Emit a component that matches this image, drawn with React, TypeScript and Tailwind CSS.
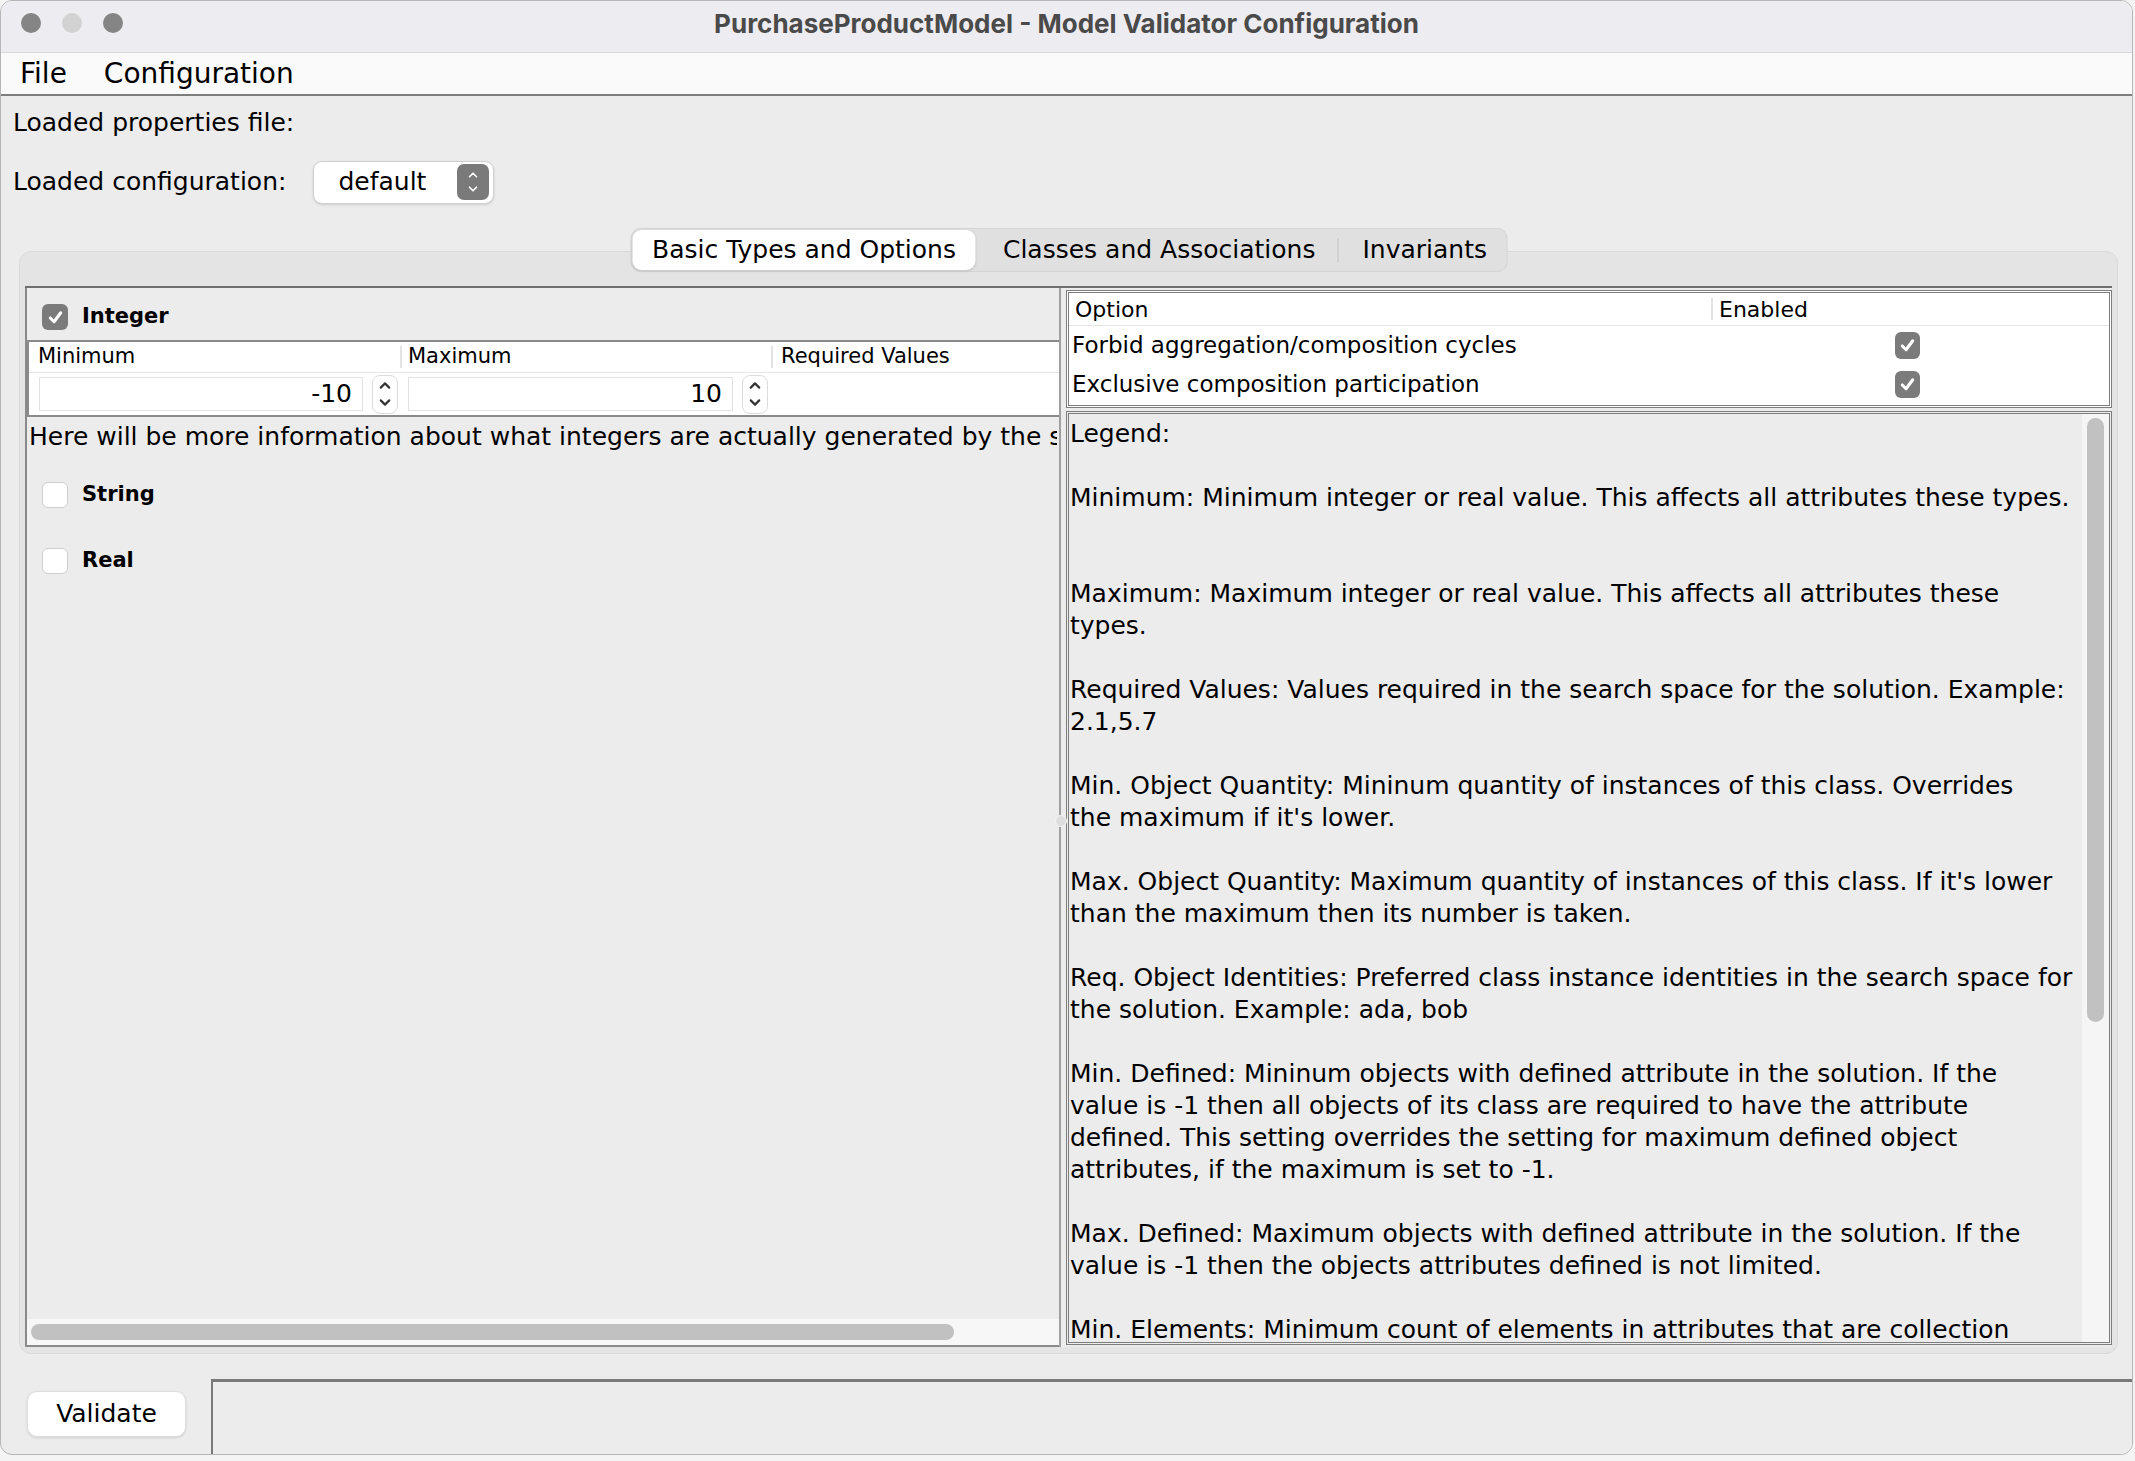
import { ChevronDown, ChevronUp } from "lucide-react";

const body = { fontFamily: '"DejaVu Sans", "Liberation Sans", sans-serif' };

const legend = [
  "Legend:",
  "",
  "Minimum: Minimum integer or real value. This affects all attributes these types.",
  "",
  "",
  "Maximum: Maximum integer or real value. This affects all attributes these",
  "types.",
  "",
  "Required Values: Values required in the search space for the solution. Example:",
  "2.1,5.7",
  "",
  "Min. Object Quantity: Mininum quantity of instances of this class. Overrides",
  "the maximum if it's lower.",
  "",
  "Max. Object Quantity: Maximum quantity of instances of this class. If it's lower",
  "than the maximum then its number is taken.",
  "",
  "Req. Object Identities: Preferred class instance identities in the search space for",
  "the solution. Example: ada, bob",
  "",
  "Min. Defined: Mininum objects with defined attribute in the solution. If the",
  "value is -1 then all objects of its class are required to have the attribute",
  "defined. This setting overrides the setting for maximum defined object",
  "attributes, if the maximum is set to -1.",
  "",
  "Max. Defined: Maximum objects with defined attribute in the solution. If the",
  "value is -1 then the objects attributes defined is not limited.",
  "",
  "Min. Elements: Minimum count of elements in attributes that are collection",
];

function Check({ on, small }: { on: boolean; small?: boolean }) {
  const size = small ? "w-[25px] h-[27px]" : "w-[26px] h-[26px]";
  if (!on)
    return (
      <div
        className={`${size} rounded-[6px] bg-white border border-[#cfcfcf] shrink-0`}
      />
    );
  return (
    <div
      className={`${size} rounded-[6px] bg-[#7b7b7b] flex items-center justify-center shrink-0`}
    >
      <svg viewBox="0 0 20 20" className="w-[19px] h-[19px]">
        <path
          d="M4.5 10.5 L8.5 14.5 L15.5 5"
          fill="none"
          stroke="white"
          strokeWidth="3.2"
          strokeLinecap="round"
          strokeLinejoin="round"
        />
      </svg>
    </div>
  );
}

function Spinner({ value, w }: { value: string; w: string }) {
  return (
    <div className="flex items-center">
      <div
        className={`${w} h-[34px] bg-white border border-[#e2e2e2] flex items-center justify-end pr-[10px] text-[25px] text-black`}
      >
        {value}
      </div>
      <div className="ml-[9px] w-[26px] h-[39px] rounded-[8px] bg-white border border-[#dcdcdc] flex flex-col items-center justify-center text-[#333]">
        <ChevronUp className="w-[20px] h-[17px]" strokeWidth={3} />
        <ChevronDown className="w-[20px] h-[17px]" strokeWidth={3} />
      </div>
    </div>
  );
}

export default function App() {
  return (
    <div
      className="w-[2135px] h-[1461px] bg-[#f4f4f4] overflow-hidden relative"
      style={body}
    >
      <div className="w-[2133px] h-[1455px] rounded-[12px] bg-[#ececec] flex flex-col overflow-hidden border border-[#b5b5b5]">
        {/* title bar */}
        <div className="h-[52px] bg-[#edecf0] border-b border-[#d8d8d8] flex items-center relative shrink-0 pb-[8px]">
          <div className="flex items-center gap-[21px] pl-[20px]">
            <div className="w-[20px] h-[20px] rounded-full bg-[#858585]" />
            <div className="w-[20px] h-[20px] rounded-full bg-[#d2d2d2]" />
            <div className="w-[20px] h-[20px] rounded-full bg-[#858585]" />
          </div>
          <div
            className="absolute left-0 right-0 top-0 h-[44px] flex items-center justify-center text-[26px] font-bold text-[#4a4a4a]"
            style={{ fontFamily: "Inter, sans-serif" }}
          >
            PurchaseProductModel - Model Validator Configuration
          </div>
        </div>

        {/* menu */}
        <div className="h-[43px] bg-[#fafafa] border-b-2 border-[#7e7e7e] flex items-center gap-[37px] pl-[19px] text-[28px] text-black shrink-0">
          <span>File</span>
          <span>Configuration</span>
        </div>

        <div className="flex flex-col flex-1 min-h-0">
          <div className="h-[54px] flex items-center pl-[12px] text-[25px] text-black">
            Loaded properties file:
          </div>
          <div className="h-[64px] flex items-center pl-[12px] text-[25px] text-black">
            <span>Loaded configuration:</span>
            <div className="ml-[27px] w-[181px] h-[43px] rounded-[9px] bg-white border border-[#cfcfcf] flex items-center justify-between pl-[24px] pr-[4px] shadow-sm">
              <span>default</span>
              <div className="w-[32px] h-[36px] rounded-[7px] bg-[#7a7a7a] flex flex-col items-center justify-center text-white">
                <ChevronUp className="w-[18px] h-[14px]" strokeWidth={3} />
                <ChevronDown className="w-[18px] h-[14px]" strokeWidth={3} />
              </div>
            </div>
          </div>

          {/* tabbed pane */}
          <div className="relative ml-[18px] mr-[14px] mt-[37px] h-[1103px] rounded-[12px] bg-[#e4e4e4] border border-[#d9d9d9] px-[5px] pt-[34px] pb-[6px] flex flex-col">
            <div className="absolute left-1/2 -translate-x-1/2 top-[-24px] h-[44px] rounded-[10px] bg-[#e0e0e0] border border-[#d4d4d4] flex items-center text-[25px] text-black p-[1px] whitespace-nowrap">
              <div className="h-full px-[20px] rounded-[9px] bg-white shadow flex items-center">
                Basic Types and Options
              </div>
              <div className="pl-[27px] pr-[22px]">Classes and Associations</div>
              <div className="w-px h-[24px] bg-[#c4c4c4]" />
              <div className="pl-[24px] pr-[18px]">Invariants</div>
            </div>

            <div className="flex-1 min-h-0 border-t-2 border-[#6f6f6f] flex">
              {/* left panel */}
              <div className="w-[1034px] border-l-2 border-b-2 border-[#8a8a8a] bg-[#ececec] flex flex-col relative">
                <div className="flex-1 min-h-0 overflow-hidden">
                  <div className="h-[52px] flex items-center pl-[15px] pt-[6px] gap-[14px]">
                    <Check on />
                    <span className="text-[21px] font-bold text-black">Integer</span>
                  </div>
                  <div className="w-[1060px] border-t-2 border-l-2 border-b-2 border-[#8a8a8a] bg-white">
                    <div className="h-[31px] flex text-[21px] text-black border-b border-[#e6e6e6]">
                      <div className="w-[371px] pl-[9px] flex items-center">Minimum</div>
                      <div className="w-[2px] h-[22px] bg-[#e3e3e3] self-center" />
                      <div className="w-[369px] pl-[6px] flex items-center">Maximum</div>
                      <div className="w-[2px] h-[22px] bg-[#e3e3e3] self-center" />
                      <div className="flex-1 pl-[8px] flex items-center">Required Values</div>
                    </div>
                    <div className="h-[42px] flex items-center pl-[10px] gap-[10px]">
                      <Spinner value="-10" w="w-[324px]" />
                      <Spinner value="10" w="w-[325px]" />
                    </div>
                  </div>
                  <div className="w-[1030px] h-[40px] flex items-center pl-[2px] text-[25px] text-black whitespace-nowrap overflow-hidden">
                    Here will be more information about what integers are actually generated by the solver
                  </div>
                  <div className="h-[66px] mt-[5px] flex items-center pl-[15px] gap-[14px]">
                    <Check on={false} />
                    <span className="text-[21px] font-bold text-black">String</span>
                  </div>
                  <div className="h-[66px] flex items-center pl-[15px] gap-[14px]">
                    <Check on={false} />
                    <span className="text-[21px] font-bold text-black">Real</span>
                  </div>
                </div>
                <div className="h-[26px] bg-[#f7f7f7] flex items-center px-[4px]">
                  <div className="w-[923px] h-[16px] rounded-full bg-[#c1c1c1]" />
                </div>
                <div className="absolute right-[-8px] top-[527px] w-[12px] h-[12px] rounded-full bg-[#dedede] border border-[#f4f4f4]" />
              </div>

              {/* divider */}
              <div className="w-[7px] bg-[#ececec] border-l-2 border-[#a0a0a0]" />

              {/* right panel */}
              <div className="flex-1 flex flex-col bg-[#ececec] pt-[2px] pb-[2px]">
                <div className="h-[118px] border-[3px] border-double border-[#7d7d7d] bg-white text-[22px] text-black">
                  <div className="h-[33px] flex border-b border-[#e4e4e4]">
                    <div className="w-[642px] pl-[6px] flex items-center">Option</div>
                    <div className="w-[2px] h-[22px] bg-[#e3e3e3] self-center" />
                    <div className="flex-1 pl-[6px] flex items-center">Enabled</div>
                  </div>
                  <div className="h-[39px] flex items-center text-[23px]">
                    <div className="w-[826px] pl-[3px]">Forbid aggregation/composition cycles</div>
                    <Check on small />
                  </div>
                  <div className="h-[39px] flex items-center text-[23px]">
                    <div className="w-[826px] pl-[3px]">Exclusive composition participation</div>
                    <Check on small />
                  </div>
                </div>
                <div className="flex-1 min-h-0 mt-[3px] border-[3px] border-double border-[#7d7d7d] bg-[#ececec] flex">
                  <div className="flex-1 overflow-hidden pl-[1px] pt-[4px] text-[25px] text-black">
                    {legend.map((line, i) => (
                      <div key={i} className="h-[32px] leading-[32px] whitespace-nowrap">
                        {line}
                      </div>
                    ))}
                  </div>
                  <div className="w-[27px] bg-[#f5f5f5] pt-[4px] flex justify-center">
                    <div className="w-[17px] h-[604px] rounded-full bg-[#c1c1c1]" />
                  </div>
                </div>
              </div>
            </div>
          </div>

          {/* bottom */}
          <div className="flex-1 flex items-end">
            <div className="pl-[26px] pb-[17px]">
              <div className="w-[159px] h-[46px] rounded-[10px] bg-white shadow-sm border border-[#dedede] flex items-center justify-center text-[25px] text-black">
                Validate
              </div>
            </div>
            <div className="ml-[25px] flex-1 h-[75px] border-t-[3px] border-l-2 border-[#7a7a7a] bg-[#ececec]" />
          </div>
        </div>
      </div>
    </div>
  );
}
